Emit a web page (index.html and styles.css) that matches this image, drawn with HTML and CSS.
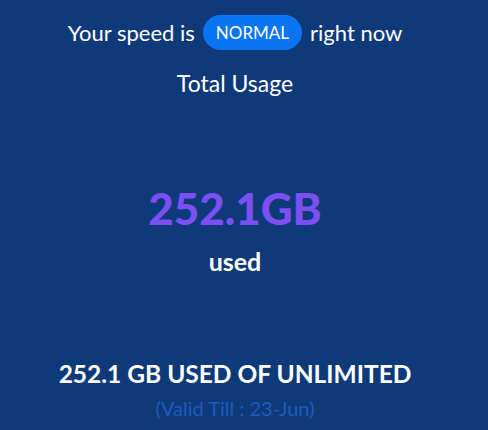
FILE: index.html
```html
<!DOCTYPE html>
<html>
<head>
<meta charset="utf-8">
<link rel="stylesheet" href="styles.css">
</head>
<body>
<div class="panel">
  <div class="speed">
    <span>Your speed is</span>
    <span class="pill">NORMAL</span>
    <span>right now</span>
  </div>
  <div class="title">Total Usage</div>
  <div class="usage">
    <div class="amount">252.1GB</div>
    <div class="used">used</div>
  </div>
  <div class="summary">252.1 GB USED OF UNLIMITED</div>
  <div class="valid">(Valid Till : 23-Jun)</div>
</div>
</body>
</html>
```
FILE: styles.css
```css
html, body {
  margin: 0;
  padding: 0;
  background: #0f3a7a;
}
body {
  font-family: Lato, "Open Sans", sans-serif;
  color: #ffffff;
  height: 430px;
  overflow: hidden;
}
.panel {
  width: 470px;
  display: flex;
  flex-direction: column;
  align-items: center;
  padding-top: 15px;
}
.speed {
  display: flex;
  align-items: center;
  gap: 8px;
  font-size: 22px;
  height: 35px;
}
.pill {
  background: #0a74f2;
  border-radius: 18px;
  height: 35px;
  padding: 0 13px;
  display: flex;
  align-items: center;
  font-size: 17px;
}
.title {
  margin-top: 20px;
  font-size: 23px;
  line-height: 1.2;
}
.usage {
  margin-top: 84px;
  display: flex;
  flex-direction: column;
  align-items: center;
}
.amount {
  font-size: 44px;
  font-weight: 900;
  color: #7b4ff2;
  line-height: 1.2;
}
.used {
  font-size: 25px;
  font-weight: 700;
  line-height: 1.2;
  margin-top: 12px;
}
.summary {
  margin-top: 83px;
  font-size: 24.5px;
  font-weight: 700;
  line-height: 1.2;
}
.valid {
  margin-top: 7px;
  font-size: 20px;
  line-height: 1.2;
  color: #1e5bbd;
}
```
